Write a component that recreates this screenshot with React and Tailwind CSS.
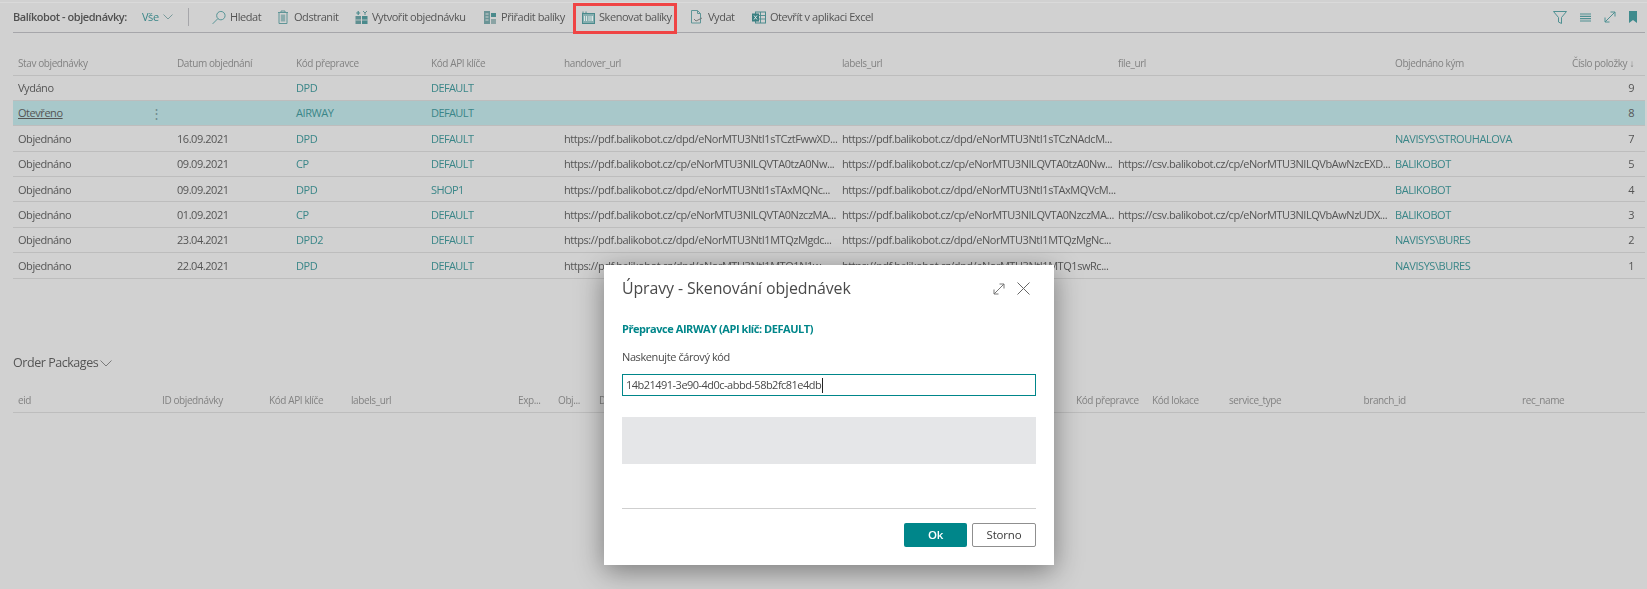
const FONT = { fontFamily: '"Open Sans", "Liberation Sans", sans-serif' }

const rows = [
  { stav: 'Vydáno', datum: '', kod: 'DPD', api: 'DEFAULT', hand: '', labels: '', file: '', kym: '', no: 9 },
  { stav: 'Otevřeno', datum: '', kod: 'AIRWAY', api: 'DEFAULT', hand: '', labels: '', file: '', kym: '', no: 8, selected: true },
  { stav: 'Objednáno', datum: '16.09.2021', kod: 'DPD', api: 'DEFAULT', hand: 'https://pdf.balikobot.cz/dpd/eNorMTU3NtI1sTCztFwwXD...', labels: 'https://pdf.balikobot.cz/dpd/eNorMTU3NtI1sTCzNAdcM...', file: '', kym: 'NAVISYS\\STROUHALOVA', no: 7 },
  { stav: 'Objednáno', datum: '09.09.2021', kod: 'CP', api: 'DEFAULT', hand: 'https://pdf.balikobot.cz/cp/eNorMTU3NILQVTA0tzA0Nw...', labels: 'https://pdf.balikobot.cz/cp/eNorMTU3NILQVTA0tzA0Nw...', file: 'https://csv.balikobot.cz/cp/eNorMTU3NILQVbAwNzcEXD...', kym: 'BALIKOBOT', no: 5 },
  { stav: 'Objednáno', datum: '09.09.2021', kod: 'DPD', api: 'SHOP1', hand: 'https://pdf.balikobot.cz/dpd/eNorMTU3NtI1sTAxMQNc...', labels: 'https://pdf.balikobot.cz/dpd/eNorMTU3NtI1sTAxMQVcM...', file: '', kym: 'BALIKOBOT', no: 4 },
  { stav: 'Objednáno', datum: '01.09.2021', kod: 'CP', api: 'DEFAULT', hand: 'https://pdf.balikobot.cz/cp/eNorMTU3NILQVTA0NzczMA...', labels: 'https://pdf.balikobot.cz/cp/eNorMTU3NILQVTA0NzczMA...', file: 'https://csv.balikobot.cz/cp/eNorMTU3NILQVbAwNzUDX...', kym: 'BALIKOBOT', no: 3 },
  { stav: 'Objednáno', datum: '23.04.2021', kod: 'DPD2', api: 'DEFAULT', hand: 'https://pdf.balikobot.cz/dpd/eNorMTU3NtI1MTQzMgdc...', labels: 'https://pdf.balikobot.cz/dpd/eNorMTU3NtI1MTQzMgNc...', file: '', kym: 'NAVISYS\\BURES', no: 2 },
  { stav: 'Objednáno', datum: '22.04.2021', kod: 'DPD', api: 'DEFAULT', hand: 'https://pdf.balikobot.cz/dpd/eNorMTU3NtI1MTQ1N1w...', labels: 'https://pdf.balikobot.cz/dpd/eNorMTU3NtI1MTQ1swRc...', file: '', kym: 'NAVISYS\\BURES', no: 1 },
]

const Chevron = ({ width, color }) => (
  <svg width={width} height={width / 2 + 1} viewBox={`0 0 ${width} ${width / 2 + 1}`} fill="none" stroke={color} strokeWidth="1">
    <path d={`M0.5 0.5L${width / 2} ${width / 2}L${width - 0.5} 0.5`} />
  </svg>
)

const IconSearch = () => (
  <svg width="15" height="15" viewBox="0 0 15 15" fill="none" stroke="#4f9092" strokeWidth="1">
    <circle cx="9.5" cy="5.5" r="4.5" />
    <path d="M6.3 8.7L0.7 14.3" />
  </svg>
)

const IconTrash = () => (
  <svg width="10" height="14" viewBox="0 0 10 14" fill="none" stroke="#5f9597" strokeWidth="1">
    <path d="M0 2.5h10M3 2.5V1h4v1.5M1 2.5v11h8v-11" />
    <rect x="2.8" y="4.5" width="4.4" height="7" fill="#8aabac" stroke="none" />
  </svg>
)

const IconCreate = () => (
  <svg width="13" height="15" viewBox="0 0 13 15" fill="none">
    <rect x="0.5" y="6" width="5.5" height="8" fill="#5f8f91" />
    <rect x="7" y="6" width="5.5" height="8" fill="#4a8a8c" />
    <path d="M3.2 1v4M1.2 3h4" stroke="#4a8a8c" strokeWidth="1.2" />
    <path d="M8 1l2 2 2-2M10 3v2" stroke="#5f8f91" strokeWidth="1" />
    <path d="M0.5 10h12" stroke="#d1d1d1" strokeWidth="0.8" />
  </svg>
)

const IconAssign = () => (
  <svg width="12" height="15" viewBox="0 0 12 15" fill="none">
    <rect x="0" y="1" width="6" height="13" fill="#6a9496" />
    <rect x="7" y="3" width="5" height="4" fill="#4a8a8c" />
    <rect x="7" y="9" width="5" height="5" fill="#8aa3a4" />
    <path d="M1.5 4h3M1.5 7h3M1.5 10h3" stroke="#d1d1d1" strokeWidth="1" />
  </svg>
)

const IconScan = () => (
  <svg width="13" height="13" viewBox="0 0 13 13" fill="none">
    <rect x="0.5" y="2.5" width="12" height="10" fill="#86aeaf" stroke="#4a8a8c" />
    <path d="M2.5 5v5M4.5 5v5M7 5v5M9 5v5M10.5 5v5" stroke="#e2eaea" strokeWidth="0.9" />
    <path d="M1 0.5v2M4 0.5v2" stroke="#4a8a8c" strokeWidth="1" />
  </svg>
)

const IconIssue = () => (
  <svg width="12" height="14" viewBox="0 0 12 14" fill="none" stroke="#5f9597" strokeWidth="1">
    <path d="M0.5 0.5h6l3 3v9.5h-9z" />
    <path d="M6.5 0.5v3h3" />
    <path d="M3 9l2 2 6-3" stroke="#777" />
  </svg>
)

const IconExcel = () => (
  <svg width="14" height="13" viewBox="0 0 14 13" fill="none">
    <rect x="3.5" y="1" width="10" height="11" fill="#d1d1d1" stroke="#4a8a8c" />
    <path d="M8.5 1v11M3.5 4.5h10M3.5 8h10" stroke="#4a8a8c" strokeWidth="0.9" />
    <rect x="0" y="2.5" width="7" height="8" fill="#3a7f81" />
    <path d="M2 4.5l3 4M5 4.5l-3 4" stroke="#e8eeee" strokeWidth="0.9" />
  </svg>
)

// funnel, list, diagonal expand and bookmark of the right hand corner
const IconFilter = () => (
  <svg width="14" height="13" viewBox="0 0 14 13" fill="none" stroke="#4f9092" strokeWidth="1">
    <path d="M0.5 0.5h13L8.5 6.5v6l-3-1.5V6.5z" />
  </svg>
)

const IconList = () => (
  <svg width="11" height="9" viewBox="0 0 11 9" fill="none" stroke="#4f9092" strokeWidth="1.2">
    <path d="M0 1h11M0 3.4h11M0 5.7h11M0 8h11" />
  </svg>
)

const IconDiagonal = ({ size = 12, color = '#4f9092' }) => (
  <svg width={size} height={size} viewBox="0 0 12 12" fill="none" stroke={color} strokeWidth="1">
    <path d="M1 11L11 1M6.5 1H11v4.5M1 6.5V11h4.5" />
  </svg>
)

const IconBookmark = () => (
  <svg width="8" height="12" viewBox="0 0 8 12" fill="#3f8b8d">
    <path d="M0 0h8v12L4 9l-4 3z" />
  </svg>
)

const IconClose = () => (
  <svg width="13" height="13" viewBox="0 0 13 13" fill="none" stroke="#666" strokeWidth="1">
    <path d="M0.5 0.5l12 12M12.5 0.5l-12 12" />
  </svg>
)

function ToolItem({ icon, label, className }) {
  return (
    <div className={`flex items-center gap-[4px] whitespace-nowrap ${className}`}>
      <span className="flex w-[14px] justify-center">{icon}</span>
      <span>{label}</span>
    </div>
  )
}

export default function App() {
  return (
    <div style={FONT} className="relative h-[589px] w-[1647px] overflow-hidden bg-[#d1d1d1] text-[11px] tracking-[-0.45px] text-[#555]">
      {/* dimmed page behind the dialog */}
      <div className="h-full blur-[0.45px]">
        <div className="h-[2px]" />
        <div className="h-px bg-[#dadada]" />

        {/* command bar */}
        <div className="ml-[13px] mr-[2px] flex h-[30px] items-center border-b border-[#a6a6aa] pb-[1px]">
          <span className="w-[129px] font-semibold text-[#505050]">Balíkobot - objednávky:</span>
          <span className="w-[21px] text-[#3a8688]">Vše</span>
          <Chevron width={10} color="#7a9a9b" />
          <div className="ml-[15px] h-[18px] w-px bg-[#a6a6aa]" />
          <ToolItem className="ml-[23px] w-[64px]" icon={<IconSearch />} label="Hledat" />
          <ToolItem className="w-[78px]" icon={<IconTrash />} label="Odstranit" />
          <ToolItem className="w-[129px]" icon={<IconCreate />} label="Vytvořit objednávku" />
          <ToolItem className="w-[98px]" icon={<IconAssign />} label="Přiřadit balíky" />
          <ToolItem className="w-[109px]" icon={<IconScan />} label="Skenovat balíky" />
          <ToolItem className="w-[62px]" icon={<IconIssue />} label="Vydat" />
          <ToolItem icon={<IconExcel />} label="Otevřít v aplikaci Excel" />
          <div className="ml-auto flex items-center gap-[13px] pr-[8px]">
            <IconFilter />
            <IconList />
            <IconDiagonal />
            <IconBookmark />
          </div>
        </div>

        {/* orders table */}
        <div className="ml-[13px] mr-[2px] mt-[17px]">
          <div className="grid h-[25.5px] grid-cols-[159px_119px_135px_133px_278px_276px_277px_1fr_60px] items-center border-b border-[#bdbdbd] pl-[5px] pt-[3px] text-[10px] tracking-[-0.4px] text-[#828282]">
            <span>Stav objednávky</span>
            <span>Datum objednání</span>
            <span>Kód přepravce</span>
            <span>Kód API klíče</span>
            <span>handover_url</span>
            <span>labels_url</span>
            <span>file_url</span>
            <span>Objednáno kým</span>
            <span className="whitespace-nowrap pr-[11px] text-right [direction:rtl]">↓ Číslo položky</span>
          </div>
          {rows.map(r => (
            <div
              key={r.no}
              className={`relative grid h-[25.4px] grid-cols-[159px_119px_135px_133px_278px_276px_277px_1fr_60px] items-center border-b border-[#bdbdbd] pl-[5px] pt-[1px] ${r.selected ? 'bg-[#a8c8ca]' : ''}`}
            >
              <span className={r.selected ? 'underline' : ''}>{r.stav}</span>
              <span>{r.datum}</span>
              <span className="text-[#3a8688]">{r.kod}</span>
              <span className="tracking-[-0.6px] text-[#3a8688]">{r.api}</span>
              <span className="overflow-hidden whitespace-nowrap">{r.hand}</span>
              <span className="overflow-hidden whitespace-nowrap">{r.labels}</span>
              <span className="overflow-hidden whitespace-nowrap">{r.file}</span>
              <span className="text-[#3a8688]">{r.kym}</span>
              <span className="pr-[11px] text-right">{r.no}</span>
              {r.selected && <span className="absolute left-[137px] top-[2px] text-[13px] leading-[20px] text-[#6e8a8c]">⋮</span>}
            </div>
          ))}
        </div>

        {/* order packages */}
        <div className="ml-[13px] mr-[2px] mt-[75px]">
          <div className="flex h-[20px] items-center gap-[2px] text-[12.5px] text-[#555]">
            Order Packages
            <Chevron width={12} color="#7a7a7a" />
          </div>
          <div className="mt-[16px] grid h-[23px] grid-cols-[144px_107px_82px_167px_40px_41px_477px_76px_77px_134.5px_158.5px_1fr] items-center border-b border-[#bdbdbd] pl-[5px] text-[10px] tracking-[-0.4px] text-[#828282]">
            <span>eid</span>
            <span>ID objednávky</span>
            <span>Kód API klíče</span>
            <span>labels_url</span>
            <span>Exp...</span>
            <span>Obj...</span>
            <span>D</span>
            <span>Kód přepravce</span>
            <span>Kód lokace</span>
            <span>service_type</span>
            <span>branch_id</span>
            <span>rec_name</span>
          </div>
        </div>
      </div>

      {/* red annotation round the scan action */}
      <div className="absolute left-[573px] top-[3px] h-[31px] w-[104px] border-[3px] border-[#ef4444]" />

      {/* dialog */}
      <div className="absolute left-[604px] top-[265px] flex h-[300px] w-[450px] flex-col bg-white px-[18px] text-[#4a4a4a] shadow-[0_6px_26px_rgba(0,0,0,0.42)]">
        <div className="flex h-[46px] items-center justify-between pt-[1px]">
          <span className="text-[15.9px] tracking-[-0.1px] text-[#4a4a4a]">Úpravy - Skenování objednávek</span>
          <div className="flex items-center gap-[12px] pr-[6px]">
            <IconDiagonal color="#777" />
            <IconClose />
          </div>
        </div>
        <div className="mt-[10px] text-[11px] font-bold tracking-[-0.45px] text-[#00868a]">Přepravce AIRWAY (API klíč: DEFAULT)</div>
        <div className="mt-[11px] text-[11px] tracking-[-0.4px]">Naskenujte čárový kód</div>
        <div className="mt-[9px] flex h-[22px] items-center border border-[#00868a] pl-[3px] text-[11px] tracking-[-0.52px] text-[#4a4a4a]">
          14b21491-3e90-4d0c-abbd-58b2fc81e4db
          <span className="ml-px h-[15px] w-px bg-[#222]" />
        </div>
        <div className="mt-[21px] h-[47px] bg-[#e5e6e8]" />
        <div className="mt-[44px] h-px bg-[#cfcfcf]" />
        <div className="mt-[14px] flex justify-end gap-[5px] text-[11.5px] tracking-[-0.2px]">
          <button className="h-[24px] w-[63px] rounded-[2px] bg-[#00868a] font-semibold text-white">Ok</button>
          <button className="h-[24px] w-[64px] rounded-[2px] border border-[#8f8f8f] bg-white text-[#3a3a3a]">Storno</button>
        </div>
      </div>
    </div>
  )
}
